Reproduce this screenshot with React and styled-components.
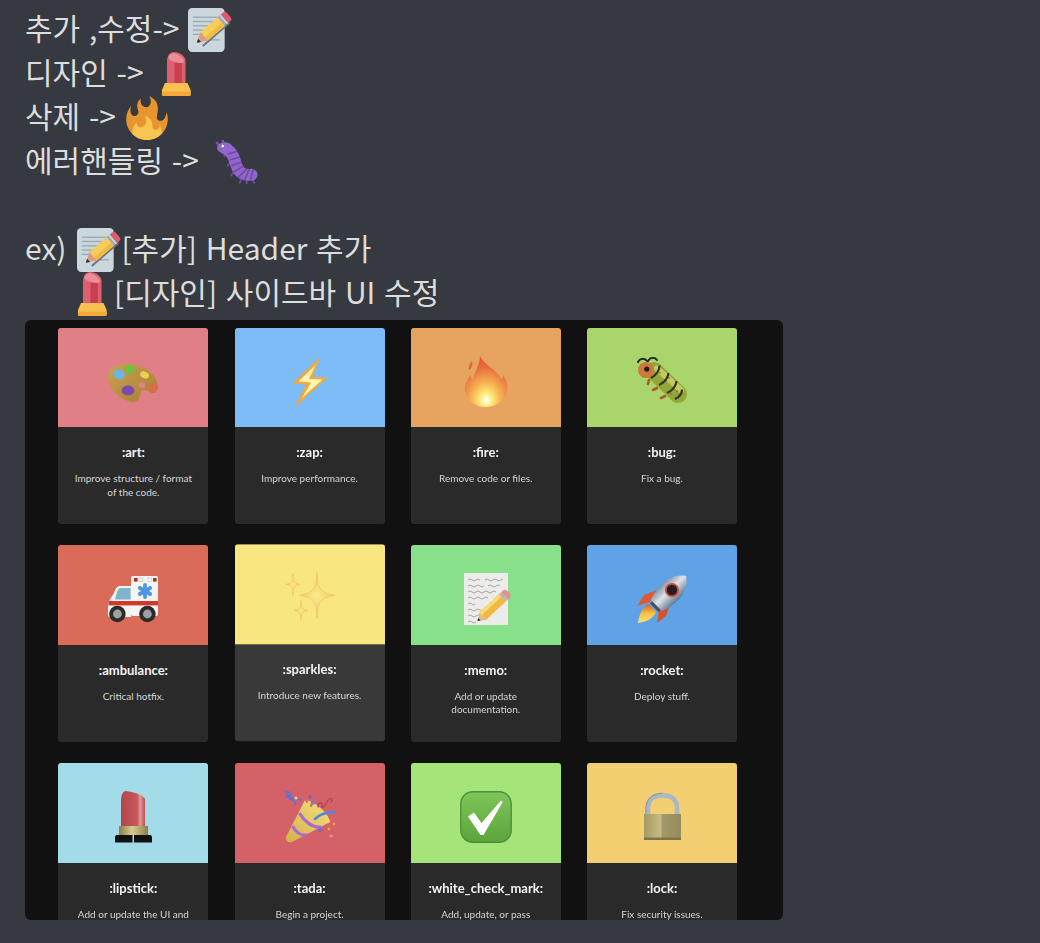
import React from 'react';
import styled, { createGlobalStyle } from 'styled-components';

const GlobalStyle = createGlobalStyle`
    html, body {
        margin: 0;
        padding: 0;
        background: #36393f;
    }
    body {
        width: 1040px;
        height: 943px;
        overflow: hidden;
        font-family: "Noto Sans CJK KR", "Noto Sans", sans-serif;
    }
`;

// ---- small chat emoji (flat style) ----

const MemoFlat = () => (
    <svg viewBox="0 0 36 36" width="44" height="44">
        <rect x="0" y="0" width="30" height="36" rx="3.4" fill="#ccd6dd" />
        <g fill="#99aab5">
            <rect x="4" y="7" width="20" height="1.1" />
            <rect x="4" y="10.5" width="18" height="1.1" />
            <rect x="4" y="14" width="15" height="1.1" />
            <rect x="4" y="17.5" width="11" height="1.1" />
            <rect x="4" y="21" width="9" height="1.1" />
            <rect x="14" y="25.5" width="12" height="1.1" />
        </g>
        <g transform="translate(7.2 28.4) rotate(-41)">
            <path d="M2 5.2 L31 5.2" stroke="#66757f" strokeWidth="1.6" />
            <path d="M0 0 L8 -4.6 L8 4.6 Z" fill="#d99e82" />
            <path d="M0 0 L3 -1.8 L3 1.8 Z" fill="#292f33" />
            <rect x="8" y="-4.6" width="18.5" height="9.2" fill="#f6cc5a" />
            <rect x="8" y="1.2" width="18.5" height="3.4" fill="#f0b93f" />
            <rect x="26.5" y="-4.6" width="3.6" height="9.2" fill="#99aab5" />
            <rect x="28.4" y="-4.6" width="1.6" height="9.2" fill="#ccd6dd" />
            <path d="M30 -4.6 H32.5 Q34.6 -4.6 34.6 -2.4 V2.4 Q34.6 4.6 32.5 4.6 H30 Z" fill="#dd5b6d" />
        </g>
    </svg>
);

const LipstickFlat = () => (
    <svg viewBox="0 0 36 36" width="44" height="44">
        <path d="M10.6 26 V8 C10.6 3 13 0 16.5 0 C21 0 25.8 3.6 25.8 7 V26 Z" fill="#dd5f70" />
        <path d="M11.8 5.2 C11.6 2.4 14 .7 16.5 1 C20 1.6 23.4 4.4 24.6 6.8 C24.8 9.4 22.4 9.6 20 8.8 C17 7.8 13.4 7.8 11.8 5.2 Z" fill="#e98d98" />
        <rect x="16.8" y="9" width="6" height="17" fill="#c93f4e" />
        <path d="M9 25.4 H27.4 L30 31 V34.5 Q30 36 28.5 36 H8 Q6.5 36 6.5 34.5 V31 Z" fill="#f7c04f" />
        <path d="M6.5 32.5 H30 V34.5 Q30 36 28.5 36 H8 Q6.5 36 6.5 34.5 Z" fill="#f4a93a" />
    </svg>
);

const FireFlat = () => (
    <svg viewBox="0 0 36 36" width="44" height="44">
        <path d="M35 19c0-2.062-.367-4.039-1.04-5.868-.46 5.389-3.333 8.157-6.335 6.868-2.812-1.208-.917-5.917-.777-8.164.236-3.809-.012-8.169-6.931-11.794 2.875 5.5.333 8.917-2.333 9.125-2.958.231-5.667-2.542-4.667-7.042-3.238 2.386-3.332 6.402-2.333 9 1.042 2.708-.042 4.958-2.583 5.208-2.84.28-4.418-3.041-2.963-8.333C2.52 10.965 1 14.805 1 19c0 9.389 7.611 17 17 17s17-7.611 17-17z" fill="#e8952f" />
        <path d="M28.394 23.999c.148 3.084-2.561 4.293-4.019 3.709-2.106-.843-1.541-2.291-2.083-5.291s-2.625-5.083-5.708-6c2.25 6.333-1.247 8.667-3.08 9.084-1.872.426-3.753-.001-3.968-4.007C7.352 23.668 6 26.676 6 30c0 .368.023.73.055 1.09C9.125 34.124 13.342 36 18 36s8.875-1.876 11.945-4.91c.032-.36.055-.722.055-1.09 0-2.187-.584-4.236-1.606-6.001z" fill="#f7c652" />
    </svg>
);

const BugFlat = () => (
    <svg viewBox="0 0 36 36" width="44" height="44">
        <g stroke="#6d4aa3" strokeWidth="1.6" strokeLinecap="round">
            <path d="M9 11 L7.6 13" />
            <path d="M12 19 L10.5 21" />
            <path d="M15 27 L13.4 29" />
            <path d="M21 33 L20.4 35" />
            <path d="M26 33.6 L26 35.6" />
            <path d="M31 33 L32 35" />
        </g>
        <path d="M4 5 L1.4 2.2 M7.4 3.6 L6.3 .6" stroke="#7b55b5" strokeWidth="1.8" strokeLinecap="round" />
        <path d="M9 7.4 C14 9 16 15 17.6 21 C19.4 27 24 29.4 30 28.4" fill="none" stroke="#9266cc" strokeWidth="9.6" strokeLinecap="round" />
        <ellipse cx="8" cy="6.4" rx="6.4" ry="4.6" fill="#9266cc" />
        <g stroke="#6f4aa8" strokeWidth="1.4" fill="none">
            <path d="M10.4 11.6 L18 9.4" />
            <path d="M12.4 16.2 L20.4 13.8" />
            <path d="M13.4 21 L22 18" />
            <path d="M15.4 26 L23 21.6" />
            <path d="M19 30.6 L26 23.6" />
            <path d="M24 33 L28 24" />
            <path d="M29 33 L31.4 24" />
        </g>
        <circle cx="6.3" cy="4.9" r="1" fill="#fff" />
    </svg>
);

// ---- picture emoji (glossy style) ----

const Palette = () => (
    <svg viewBox="0 0 52 52" width="52" height="52">
        <defs>
            <linearGradient id="wood" x1="0" y1="0" x2="1" y2="1">
                <stop offset="0" stopColor="#cda250" />
                <stop offset="1" stopColor="#a57e34" />
            </linearGradient>
        </defs>
        <path d="M1 19 C2 10 14 6 26 8 C38 10 52 20 51 32 C50 38 45 38 41 35 C37 33 33 34 33 39 C33 44 30 47 25 46 C13 44 0 32 1 19 Z" fill="url(#wood)" />
        <circle cx="35" cy="29" r="3.2" fill="#e17f87" />
        <ellipse cx="12" cy="18.5" rx="6" ry="5" fill="#6db4dc" transform="rotate(25 12 18.5)" />
        <ellipse cx="22.5" cy="13" rx="5" ry="4.2" fill="#6ac14a" />
        <ellipse cx="37.5" cy="19" rx="4.6" ry="3.2" fill="#e8d24e" transform="rotate(25 37.5 19)" />
        <ellipse cx="21" cy="34.5" rx="6.4" ry="5" fill="#7a4ab0" />
        <ellipse cx="46" cy="32" rx="4" ry="4.6" fill="#e0684c" transform="rotate(-25 46 32)" />
    </svg>
);

const Zap = () => (
    <svg viewBox="0 0 52 52" width="52" height="52">
        <path d="M36 1 L8.5 27.5 L22 28.5 L10.5 51.5 L43.5 21.5 L28.5 21 Z" fill="#f0a93e" />
        <path d="M31.5 9 L14.5 25.5 L27 26.5 L18 42 L38.5 23.5 L25 23 Z" fill="#fff4b0" />
    </svg>
);

const FireGlossy = () => (
    <svg viewBox="0 0 52 52" width="52" height="52">
        <defs>
            <radialGradient id="flame" cx="0.5" cy="0.86" r="0.8">
                <stop offset="0" stopColor="#ffffff" />
                <stop offset="0.16" stopColor="#ffee80" />
                <stop offset="0.42" stopColor="#f6b452" />
                <stop offset="0.8" stopColor="#e86c3e" />
                <stop offset="1" stopColor="#e2573a" />
            </radialGradient>
        </defs>
        <path d="M20 0 C23 8 36 13 41 22 C42 24 43 22 43 19 C47 25 49 32 46 38 C43 46 35 51 26 51 C15 51 6 45 5 35 C4 28 8 24 10 19 C11 21 12 23 13 24 C14 15 20 10 20 0 Z" fill="url(#flame)" />
        <path d="M9 14 C8 10 10 8 12 5 C13 8 12 12 9 14 Z" fill="#e8643c" />
    </svg>
);

const Caterpillar = () => (
    <svg viewBox="0 0 52 52" width="52" height="52">
        <path d="M2 6 C4 2 9 2 11 5 M12 5 C14 1 19 1 21 4" fill="none" stroke="#25261c" strokeWidth="2" strokeLinecap="round" />
        <g stroke="#b4552c" strokeWidth="2.6" strokeLinecap="round">
            <path d="M13 24 L12 28" />
            <path d="M21 32 L17 34" />
            <path d="M29 40 L25 42" />
        </g>
        <path d="M18 15 L42 38" stroke="#93a636" strokeWidth="18" strokeLinecap="round" />
        <path d="M21 12.5 L45 34" stroke="#c0cc5e" strokeWidth="6" strokeLinecap="round" />
        <g fill="#5f6f22">
            <circle cx="24" cy="17" r=".8" />
            <circle cx="29" cy="24" r=".8" />
            <circle cx="33" cy="22" r=".8" />
            <circle cx="37" cy="32" r=".8" />
            <circle cx="41" cy="35" r=".8" />
            <circle cx="26" cy="26" r=".8" />
            <circle cx="35" cy="38" r=".8" />
        </g>
        <g stroke="#33342a" strokeWidth="2.2" fill="none">
            <path d="M23.5 9.5 C23.5 14 20 19 15 22" />
            <path d="M32.5 17 C32 22 28.5 26.5 23 29" />
            <path d="M40.5 25 C40 30 36.5 34.5 31 37" />
            <path d="M46 33.5 C46 37 43.5 41 39 43" />
        </g>
        <circle cx="10" cy="14" r="8" fill="#d0773c" />
        <circle cx="10.8" cy="13" r="2.6" fill="#1b1b18" />
    </svg>
);

const Ambulance = () => (
    <svg viewBox="0 0 52 52" width="52" height="52">
        <rect x="24" y="3" width="27" height="40" rx="2" fill="#f4f4f2" />
        <path d="M24 13 H13 C10 13 9 15 7 20 L2 28 C1 30 1 34 1 42 Q1 44 3 44 H24 Z" fill="#f2f2f0" />
        <path d="M23.6 15 H13.6 C12 15 11.4 16 10 19 L8 26.5 H23.6 Z" fill="#7eb4cd" />
        <rect x="1.5" y="28" width="49.5" height="4.4" fill="#cf3a2d" />
        <rect x="27" y="5" width="3.6" height="3.6" fill="#b52a22" />
        <rect x="32" y="5" width="3.2" height="3.2" fill="#fff" stroke="#999" strokeWidth=".4" />
        <rect x="41" y="5" width="3.2" height="3.2" fill="#fff" stroke="#999" strokeWidth=".4" />
        <rect x="46" y="5" width="3.6" height="3.6" fill="#b52a22" />
        <g stroke="#4f97de" strokeWidth="3.8" strokeLinecap="round">
            <path d="M38 12 V24" />
            <path d="M32.8 15 L43.2 21" />
            <path d="M32.8 21 L43.2 15" />
        </g>
        <circle cx="10.4" cy="41" r="8.3" fill="#2b2b2b" />
        <circle cx="10.4" cy="41" r="4.4" fill="#9ba0a2" />
        <circle cx="40.4" cy="41" r="8.3" fill="#2b2b2b" />
        <circle cx="40.4" cy="41" r="4.4" fill="#9ba0a2" />
    </svg>
);

// fat four pointed star, the control points sit a bit off centre
const star = (x, y, rx, ry) => {
    const cx = rx * 0.13;
    const cy = ry * 0.13;
    return `M${x} ${y - ry} C${x + cx * 0.4} ${y - cy * 2} ${x + cx} ${y - cy} ${x + rx} ${y} C${x + cx} ${y + cy} ${x + cx * 0.4} ${y + cy * 2} ${x} ${y + ry} C${x - cx * 0.4} ${y + cy * 2} ${x - cx} ${y + cy} ${x - rx} ${y} C${x - cx} ${y - cy} ${x - cx * 0.4} ${y - cy * 2} ${x} ${y - ry} Z`;
};

const Sparkles = () => (
    <svg viewBox="0 0 52 52" width="52" height="52">
        <defs>
            <radialGradient id="spark" cx="0.5" cy="0.5" r="0.5">
                <stop offset="0" stopColor="#fbe98e" />
                <stop offset="1" stopColor="#f4c861" />
            </radialGradient>
        </defs>
        <g fill="url(#spark)" stroke="#f0bd68" strokeWidth="0.6">
            <path d={star(33, 23, 18, 23)} />
            <path d={star(9, 12, 7, 11)} />
            <path d={star(17, 38, 7, 10)} />
        </g>
    </svg>
);

const MemoGlossy = () => (
    <svg viewBox="0 0 52 52" width="52" height="52">
        <rect x="4" y="0" width="44" height="52" fill="#ececea" />
        <g fill="none" stroke="#4a4a4a" strokeWidth=".45">
            <path d="M8 7 q2 -2 4 0 t4 0 t4 0 M25 7 q2 -2 4 0 t4 0 t4 0 t6 -1" />
            <path d="M8 13 q2 -2 4 0 t4 0 t4 0 t4 0 M28 13 q2 -2 4 0 t4 0 t4 0" />
            <path d="M8 19 q2 -2 4 0 t4 0 t4 0 t4 0 t4 0 t4 0 t4 0" />
            <path d="M8 25 q2 -2 4 0 t4 0 t4 0 t4 0 t4 0" />
            <path d="M8 31 q2 -2 4 0 t3 0" />
            <path d="M8 37 q2 -2 4 0 t4 0 t4 0 t4 0" />
            <path d="M8 43 q2 -2 4 0 t4 0 t4 0" />
            <path d="M8 49 q2 -2 4 0 t4 0" />
        </g>
        <g transform="translate(17.5 48) rotate(-43)">
            <path d="M0 0 L7 -5 L7 5 Z" fill="#e2b98d" />
            <path d="M0 0 L2.6 -1.8 L2.6 1.8 Z" fill="#2a2a2a" />
            <rect x="7" y="-5" width="27" height="10" fill="#efb944" />
            <rect x="7" y="-5" width="27" height="3.6" fill="#f8da74" />
            <rect x="34" y="-5" width="3" height="10" fill="#b8b8b0" />
            <path d="M37 -5 H39.5 Q42.4 -5 42.4 0 Q42.4 5 39.5 5 H37 Z" fill="#e78d90" />
        </g>
    </svg>
);

const Rocket = () => (
    <svg viewBox="0 0 52 52" width="52" height="52">
        <defs>
            <linearGradient id="hull" x1="0" y1="0" x2="1" y2="0">
                <stop offset="0" stopColor="#7f90a6" />
                <stop offset="0.45" stopColor="#dfe4e8" />
                <stop offset="1" stopColor="#5f7690" />
            </linearGradient>
            <linearGradient id="thrust" x1="0" y1="0" x2="0" y2="1">
                <stop offset="0" stopColor="#e65a2a" />
                <stop offset="0.5" stopColor="#f8c23f" />
                <stop offset="1" stopColor="#f4e08a" />
            </linearGradient>
        </defs>
        <path d="M21 17 L8 22 L1 33 L14 29 Z" fill="#dd5a32" />
        <path d="M34 31 L30 43 L21 50 L23 38 Z" fill="#d9502c" />
        <path d="M12 31 C6 35 3 42 2 50 C10 49 17 46 20 39 Z" fill="url(#thrust)" />
        <g transform="translate(31 22) rotate(45)">
            <path d="M0 -27 C13 -18 14 -2 8 15 H-8 C-14 -2 -13 -18 0 -27 Z" fill="url(#hull)" />
            <circle cx="0" cy="-7" r="7" fill="#d8442e" />
            <circle cx="0" cy="-7" r="5.2" fill="#202024" />
            <rect x="-6" y="15" width="12" height="3" fill="#4b4f57" />
        </g>
    </svg>
);

const LipstickGlossy = () => (
    <svg viewBox="0 0 52 52" width="52" height="52">
        <defs>
            <linearGradient id="stick" x1="0" y1="0" x2="1" y2="0">
                <stop offset="0" stopColor="#b2454a" />
                <stop offset="0.68" stopColor="#c9585c" />
                <stop offset="0.8" stopColor="#e29a9a" />
                <stop offset="1" stopColor="#b94c50" />
            </linearGradient>
            <linearGradient id="gold" x1="0" y1="0" x2="1" y2="0">
                <stop offset="0" stopColor="#8f7f45" />
                <stop offset="0.45" stopColor="#d8ca92" />
                <stop offset="1" stopColor="#8f7f45" />
            </linearGradient>
        </defs>
        <path d="M14 36 V10 C14 4 16 0 19 0 C26 1 35 3 38 8 V36 Z" fill="url(#stick)" />
        <rect x="12" y="35" width="29" height="9" fill="url(#gold)" />
        <path d="M9 44 H25.5 V51.5 H8 V46 Z" fill="#111" />
        <path d="M27 44 H44 L45 46 V51.5 H27 Z" fill="#111" />
    </svg>
);

const Tada = () => (
    <svg viewBox="0 0 52 52" width="52" height="52">
        <defs>
            <linearGradient id="cone" x1="0" y1="1" x2="1" y2="0">
                <stop offset="0" stopColor="#d4b04c" />
                <stop offset="1" stopColor="#f6e07a" />
            </linearGradient>
        </defs>
        <path d="M21 9 C30 10 44 21 46 31 L8 51 C4 52 1 49 2 46 Z" fill="url(#cone)" />
        <g stroke="#a86bd4" strokeWidth="3.2" fill="none">
            <path d="M15.4 22 C20 30 28 37 37 36" />
            <path d="M8.6 35 C11 40 16 45 23 44" />
        </g>
        <g fill="none" strokeLinecap="round">
            <path d="M17 9 C9 8 2 5 2 1 C7 0 8 5 3 6 C8 9 14 11 11 14" stroke="#5a72d8" strokeWidth="1.6" />
            <path d="M23 11 C19 4 26 -1 28 3 C30 7 28 11 27 15" stroke="#d8606a" strokeWidth="2" />
            <path d="M31 28 C36 23 43 21 51 21" stroke="#4f86e0" strokeWidth="2.6" />
            <path d="M34 16 C34 11 39 10 38 15 C37 19 42 14 44 9 C47 6 50 8 47 11" stroke="#b04a5c" strokeWidth="1.5" />
        </g>
        <g>
            <circle cx="12" cy="7" r="1.6" fill="#f6dc5c" />
            <circle cx="26" cy="6" r="1.5" fill="#4f6fd8" />
            <circle cx="29" cy="12" r="1.8" fill="#6f7fd8" />
            <circle cx="44" cy="30" r="1.8" fill="#f6dc5c" />
            <circle cx="36" cy="39" r="1.8" fill="#5a72d8" />
            <circle cx="45" cy="38" r="1.4" fill="#e8a83c" />
            <circle cx="50" cy="33" r="1.4" fill="#e8a83c" />
            <circle cx="47" cy="45" r="1.6" fill="#e88ca4" />
        </g>
    </svg>
);

const Check = () => (
    <svg viewBox="0 0 52 52" width="52" height="52">
        <defs>
            <linearGradient id="tick" x1="0" y1="0" x2="0" y2="1">
                <stop offset="0" stopColor="#7fc65a" />
                <stop offset="1" stopColor="#5ba53c" />
            </linearGradient>
        </defs>
        <rect x="0.8" y="0.8" width="50.4" height="50.4" rx="12" fill="url(#tick)" stroke="#4f8e38" strokeWidth="1.4" />
        <path d="M8 25.5 L14 21.5 L21.5 32 L41 9.5 L42.8 11 L23.5 44 L20.5 44 Z" fill="#fff" />
    </svg>
);

const Lock = () => (
    <svg viewBox="0 0 52 52" width="52" height="52">
        <defs>
            <linearGradient id="brass" x1="0" y1="0" x2="1" y2="0">
                <stop offset="0" stopColor="#a49a62" />
                <stop offset="0.45" stopColor="#c8bc84" />
                <stop offset="0.5" stopColor="#a3986a" />
                <stop offset="1" stopColor="#948a5c" />
            </linearGradient>
        </defs>
        <path d="M12 24 V17 C12 8 18 4.4 26.5 4.4 C35 4.4 41 8 41 17 V24" fill="none" stroke="#a9b7c6" strokeWidth="4.6" />
        <path d="M9.8 23 V17 C9.8 8 17 2.2 26.5 2.2" fill="none" stroke="#7c8896" strokeWidth=".8" />
        <rect x="8" y="23" width="37" height="26" fill="url(#brass)" />
        <rect x="8" y="46.5" width="37" height="2.5" fill="#7d744c" />
    </svg>
);

// ---- data ----

const cards = [
    { name: ':art:', text: ['Improve structure / format', 'of the code.'], color: '#e17f87', Emoji: Palette },
    { name: ':zap:', text: ['Improve performance.'], color: '#7dbcf6', Emoji: Zap },
    { name: ':fire:', text: ['Remove code or files.'], color: '#e7a360', Emoji: FireGlossy },
    { name: ':bug:', text: ['Fix a bug.'], color: '#a9d56d', Emoji: Caterpillar },
    { name: ':ambulance:', text: ['Critical hotfix.'], color: '#d96b58', Emoji: Ambulance },
    { name: ':sparkles:', text: ['Introduce new features.'], color: '#f8e680', Emoji: Sparkles, lifted: true },
    { name: ':memo:', text: ['Add or update', 'documentation.'], color: '#89e08a', Emoji: MemoGlossy },
    { name: ':rocket:', text: ['Deploy stuff.'], color: '#5fa3e6', Emoji: Rocket },
    { name: ':lipstick:', text: ['Add or update the UI and'], color: '#a4dbe8', Emoji: LipstickGlossy },
    { name: ':tada:', text: ['Begin a project.'], color: '#d36167', Emoji: Tada },
    { name: ':white_check_mark:', text: ['Add, update, or pass'], color: '#a5e478', Emoji: Check },
    { name: ':lock:', text: ['Fix security issues.'], color: '#f3cf72', Emoji: Lock },
];

const App = () => {
    return (
        <>
            <GlobalStyle />
            <Message>
                <Line>추가 ,수정-&gt;<Glyph $left={8}><MemoFlat /></Glyph></Line>
                <Line>디자인 -&gt;<Glyph $left={10}><LipstickFlat /></Glyph></Line>
                <Line>삭제 -&gt;<Glyph $left={9}><FireFlat /></Glyph></Line>
                <Line>에러핸들링 -&gt;<Glyph $left={16}><BugFlat /></Glyph></Line>
                <Line />
                <Line>ex)<Glyph $left={11}><MemoFlat /></Glyph>[추가] Header 추가</Line>
                <Line $indent={45}><Glyph><LipstickFlat /></Glyph>[디자인] 사이드바 UI 수정</Line>
            </Message>
            <Shot>
                <Grid>
                    {cards.map(({ name, text, color, Emoji, lifted }) => (
                        <Card key={name} $lifted={lifted}>
                            <Banner $color={color}><Emoji /></Banner>
                            <CardBody>
                                <CardName>{name}</CardName>
                                <CardText>
                                    {text.map((t) => <span key={t}>{t}</span>)}
                                </CardText>
                            </CardBody>
                        </Card>
                    ))}
                </Grid>
            </Shot>
        </>
    );
};

const Message = styled.div`
    padding: 5px 0 0 25px;
    color: #dcddde;
    font-size: 30px;
    word-spacing: 2px;
`;

const Line = styled.div`
    display: flex;
    align-items: center;
    height: 44px;
    line-height: 42px;
    white-space: pre;
    padding-left: ${(p) => p.$indent || 0}px;
`;

const Glyph = styled.span`
    display: inline-flex;
    width: 44px;
    height: 44px;
    flex: none;
    margin-top: 6px;
    margin-left: ${(p) => p.$left || 0}px;
`;

const Shot = styled.div`
    width: 758px;
    height: 600px;
    margin: 7px 0 0 25px;
    background: #111112;
    border-radius: 6px;
    overflow: hidden;
`;

const Grid = styled.div`
    display: grid;
    grid-template-columns: repeat(4, 150px);
    column-gap: 26.2px;
    row-gap: 21px;
    padding: 7.6px 0 0 33.4px;
    filter: blur(0.35px);
`;

const Card = styled.div`
    height: 196.8px;
    border-radius: 3px;
    overflow: hidden;
    background: ${(p) => (p.$lifted ? '#393939' : '#2a2a2a')};
    ${(p) => p.$lifted && 'transform: translateY(-0.7px);'}
`;

const Banner = styled.div`
    height: 99.5px;
    display: flex;
    justify-content: center;
    align-items: flex-start;
    padding-top: 28px;
    box-sizing: border-box;
    background: ${(p) => p.$color};
`;

const CardBody = styled.div`
    padding-top: 17px;
    text-align: center;
    font-family: Lato, "Open Sans", sans-serif;
`;

const CardName = styled.div`
    color: #f4f4f4;
    font-size: 13px;
    line-height: 16px;
    font-weight: 700;
`;

const CardText = styled.div`
    margin-top: 12px;
    color: #d6d6d6;
    font-size: 10px;
    line-height: 13.5px;

    span {
        display: block;
    }
`;

export default App;
